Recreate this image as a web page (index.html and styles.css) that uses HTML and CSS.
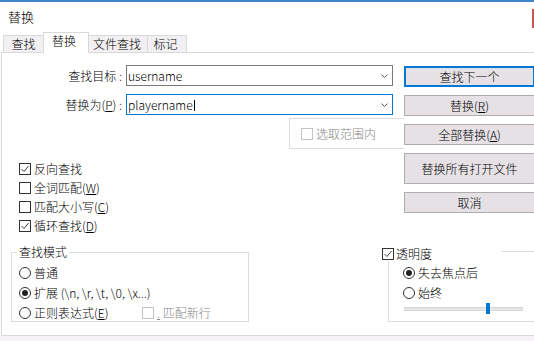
FILE: index.html
```html
<!DOCTYPE html>
<html lang="zh-CN">
<head>
    <meta charset="UTF-8">
    <title>替换</title>
    <link rel="stylesheet" href="styles.css">
</head>
<body>

<div class="titlebar">
    <span class="title">替换</span>
    <span class="close-edge"></span>
</div>

<div class="tabs">
    <div class="tab tab-find">查找</div>
    <div class="tab tab-replace active">替换</div>
    <div class="tab tab-files">文件查找</div>
    <div class="tab tab-mark">标记</div>
</div>

<div class="panel">
    <div class="top">
        <div class="left">
            <div class="field">
                <span class="field-label">查找目标 :</span>
                <div class="combo">
                    <span class="combo-text">username</span>
                    <svg class="chevron" width="7" height="4" viewBox="0 0 7 4"><polyline points="0.5,0.5 3.5,3.5 6.5,0.5" fill="none" stroke="#606060" stroke-width="1"/></svg>
                </div>
            </div>
            <div class="field">
                <span class="field-label">替换为(<u>P</u>) :</span>
                <div class="combo focused">
                    <span class="combo-text">playername<span class="caret"></span></span>
                    <svg class="chevron" width="7" height="4" viewBox="0 0 7 4"><polyline points="0.5,0.5 3.5,3.5 6.5,0.5" fill="none" stroke="#606060" stroke-width="1"/></svg>
                </div>
            </div>

            <div class="scope">
                <span class="box disabled"></span>
                <span class="label disabled-text">选取范围内</span>
            </div>

            <div class="options">
                <div class="opt">
                    <span class="box"><svg width="10" height="10" viewBox="0 0 10 10"><polyline points="1.5,5 4,7.5 8.5,2" fill="none" stroke="#444" stroke-width="1"/></svg></span>
                    <span class="label">反向查找</span>
                </div>
                <div class="opt">
                    <span class="box"></span>
                    <span class="label">全词匹配(<u>W</u>)</span>
                </div>
                <div class="opt">
                    <span class="box"></span>
                    <span class="label">匹配大小写(<u>C</u>)</span>
                </div>
                <div class="opt">
                    <span class="box"><svg width="10" height="10" viewBox="0 0 10 10"><polyline points="1.5,5 4,7.5 8.5,2" fill="none" stroke="#444" stroke-width="1"/></svg></span>
                    <span class="label">循环查找(<u>D</u>)</span>
                </div>
            </div>
        </div>

        <div class="buttons">
            <button class="btn default">查找下一个</button>
            <button class="btn">替换(<u>R</u>)</button>
            <button class="btn">全部替换(<u>A</u>)</button>
            <button class="btn tall">替换所有打开文件</button>
            <button class="btn">取消</button>
        </div>
    </div>

    <div class="bottom">
        <div class="mode">
            <span class="group-title">查找模式</span>
            <div class="mode-box">
                <div class="radio-row">
                    <span class="radio"></span>
                    <span class="label">普通</span>
                </div>
                <div class="radio-row">
                    <span class="radio checked"></span>
                    <span class="label">扩展 (\n, \r, \t, \0, \x...)</span>
                </div>
                <div class="radio-row">
                    <div class="radio-opt">
                        <span class="radio"></span>
                        <span class="label">正则表达式(<u>E</u>)</span>
                    </div>
                    <span class="box disabled"></span>
                    <span class="label disabled-text"><u>.</u> 匹配新行</span>
                </div>
            </div>
        </div>

        <div class="trans">
            <div class="trans-head">
                <span class="box"><svg width="10" height="10" viewBox="0 0 10 10"><polyline points="1.5,5 4,7.5 8.5,2" fill="none" stroke="#444" stroke-width="1"/></svg></span>
                <span class="label">透明度</span>
            </div>
            <div class="trans-box">
                <div class="radio-row">
                    <span class="radio checked"></span>
                    <span class="label">失去焦点后</span>
                </div>
                <div class="radio-row">
                    <span class="radio"></span>
                    <span class="label">始终</span>
                </div>
                <svg class="slider" width="120" height="11" viewBox="0 0 120 11">
                    <rect x="0.5" y="4.5" width="118" height="3" fill="#e7e7e7" stroke="#d6d6d6"/>
                    <rect x="82" y="0" width="4" height="11" fill="#0078d7"/>
                </svg>
            </div>
        </div>
    </div>
</div>

<div class="footer"></div>

</body>
</html>
```

FILE: styles.css
```css
* {
    box-sizing: border-box;
}
body {
    margin: 0;
    width: 534px;
    height: 341px;
    overflow: hidden;
    background: #fff;
    font-family: "Noto Sans CJK SC", "Noto Sans", sans-serif;
    font-size: 12px;
    font-weight: 300;
    color: #000;
}
u {
    text-decoration-thickness: 1px;
    text-underline-offset: 1px;
}

/* title bar */
.titlebar {
    display: flex;
    align-items: center;
    height: 32px;
    padding-left: 8px;
    border-top: 2px solid #4088cc;
}
.title {
    font-size: 13px;
    line-height: 16px;
}
.close-edge {
    align-self: flex-start;
    margin-top: 7px;
    margin-left: auto;
    width: 2px;
    height: 19px;
    background: #c95454;
}

/* tabs */
.tabs {
    display: flex;
    align-items: flex-end;
    height: 20px;
    padding-left: 3px;
}
.tab {
    height: 17px;
    border: 1px solid #d9d9d9;
    border-bottom: none;
    background: #f2f0f2;
    text-align: center;
    line-height: 15px;
}
.tab + .tab {
    margin-left: -1px;
}
.tab.active {
    position: relative;
    z-index: 1;
    height: 21px;
    margin-bottom: -1px;
    background: #fff;
    padding-right: 4px;
}
.tab-find { width: 41px; }
.tab-replace { width: 46px; }
.tab-files { width: 60px; padding-right: 2px; }
.tab-mark { width: 40px; padding-right: 3px; }

/* panel */
.panel {
    width: 545px;
    height: 284px;
    margin-left: 1px;
    border: 1px solid #d9d9d9;
}
.top {
    display: grid;
    grid-template-columns: 402px 131px;
}
.left {
    display: flex;
    flex-direction: column;
    padding-top: 12px;
}
.field {
    display: flex;
    align-items: center;
    height: 21px;
}
.field + .field {
    margin-top: 8px;
}
.field-label {
    width: 124px;
    padding-right: 4px;
    text-align: right;
    line-height: 15px;
}
.combo {
    display: flex;
    align-items: center;
    width: 267px;
    height: 21px;
    padding-left: 1px;
    border: 1px solid #7a7a7a;
    background: #fff;
}
.combo.focused {
    border-color: #0078d7;
}
.combo-text {
    flex: 1;
    line-height: 15px;
}
.caret {
    display: inline-block;
    width: 1px;
    height: 11px;
    margin-left: 1px;
    background: #000;
    vertical-align: -1px;
}
.chevron {
    margin-right: 4px;
}

.scope {
    display: flex;
    align-items: center;
    height: 31px;
    margin: 3px 0 0 287px;
    padding-left: 11px;
    border: 1px solid #dcdcdc;
    border-right: none;
}

.box {
    flex: none;
    display: flex;
    align-items: center;
    justify-content: center;
    width: 12px;
    height: 12px;
    border: 1px solid #333;
    background: #fff;
}
.box.disabled {
    border-color: #c4c4c4;
}
.label {
    margin-left: 3px;
    white-space: nowrap;
}
.disabled-text {
    color: #868686;
}

.options {
    margin-top: 11px;
    padding-left: 17px;
}
.opt {
    display: flex;
    align-items: flex-start;
    height: 19px;
}
.opt .box {
    margin-top: 3px;
}
.opt .label {
    line-height: 18px;
}

/* buttons */
.buttons {
    display: flex;
    flex-direction: column;
    gap: 8px;
    padding-top: 13px;
}
.btn {
    height: 21px;
    padding: 0;
    border: 1px solid #adadad;
    background: #e5e1e5;
    font: inherit;
    color: #000;
    line-height: 19px;
    text-align: center;
}
.btn.default {
    border: 2px solid #0078d7;
    line-height: 17px;
}
.btn.tall {
    height: 31px;
    line-height: 29px;
}

/* lower groups */
.bottom {
    display: flex;
    align-items: flex-start;
    margin-top: 8px;
}
.mode {
    display: flex;
    flex-direction: column;
    width: 238px;
    margin-left: 9px;
}
.group-title {
    position: relative;
    width: fit-content;
    margin-left: 6px;
    padding: 0 2px;
    background: #fff;
    line-height: 15px;
}
.mode-box {
    height: 70px;
    margin-top: -7px;
    padding: 10px 0 0 7px;
    border: 1px solid #dcdcdc;
}
.radio-row {
    display: flex;
    align-items: flex-start;
    height: 20px;
}
.radio-row .label {
    line-height: 19px;
}
.radio-row .box {
    margin-top: 4px;
}
.radio-opt {
    display: flex;
    align-items: flex-start;
    width: 123px;
}
.radio {
    flex: none;
    display: flex;
    align-items: center;
    justify-content: center;
    width: 12px;
    height: 12px;
    margin-top: 4px;
    border: 1px solid #333;
    border-radius: 50%;
    background: #fff;
}
.radio.checked::after {
    content: "";
    width: 6px;
    height: 6px;
    border-radius: 50%;
    background: #222;
}

.trans {
    flex: 1;
    margin-left: 133px;
    margin-top: 2px;
}
.trans-head {
    position: relative;
    display: flex;
    align-items: center;
    width: 120px;
    height: 15px;
    background: #fff;
}
.trans-head .label {
    margin-left: 2px;
    line-height: 15px;
}
.trans-box {
    height: 71px;
    margin: -10px 0 0 6px;
    padding: 11px 0 0 14px;
    border: 1px solid #dcdcdc;
}
.slider {
    display: block;
    margin-left: 1px;
}

.footer {
    height: 6px;
    background: #f5f2f5;
}
```
